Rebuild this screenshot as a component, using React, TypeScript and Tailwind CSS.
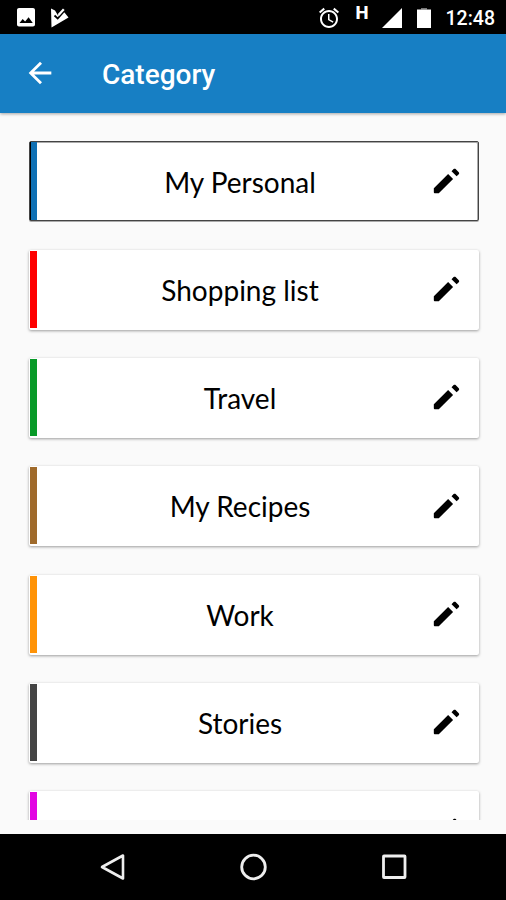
interface Category {
  name: string
  color: string
  selected?: boolean
}

const categories: Array<Category> = [
  { name: 'My Personal', color: 'bg-[#0f70b4]', selected: true },
  { name: 'Shopping list', color: 'bg-[#fe0000]' },
  { name: 'Travel', color: 'bg-[#089a28]' },
  { name: 'My Recipes', color: 'bg-[#9f6a2b]' },
  { name: 'Work', color: 'bg-[#ff9307]' },
  { name: 'Stories', color: 'bg-[#444444]' },
  { name: '', color: 'bg-[#e205e2]' },
]

function StatusBar() {
  return (
    <div className="flex h-[34px] shrink-0 items-center justify-between bg-black pr-[11px] pl-[14px] text-white">
      <div className="flex items-center gap-[11px]">
        <svg className="h-6 w-6" viewBox="0 0 24 24" fill="currentColor">
          <path d="M21 19.500V5c0-1.100-.900-2-2-2H5c-1.100 0-2 .900-2 2v14.500c0 1.100.900 2 2 2h14c1.100 0 2-.900 2-2zM5.500 18l3.200-4 2.400 2.600 3.500-4.300 4.200 5.700z" />
        </svg>
        <svg className="mt-px h-5 w-5" viewBox="0 0 20 20">
          <path
            d="M2 .500 6 2.500 9 7.500 12 4.500 15.500 4.500 19.500 9.400 2.500 19.500z"
            fill="currentColor"
          />
          <path d="M5.500 7.500 8.700 10.500 14.500 4" fill="none" stroke="black" strokeWidth="1.800" />
          <path d="M9.500 7 14.800 1.300" stroke="currentColor" strokeWidth="2.200" />
        </svg>
      </div>

      <div className="flex items-center">
        <svg className="mt-px h-6 w-6" viewBox="0 0 24 24" fill="currentColor">
          <path d="M22 5.720l-4.600-3.860-1.290 1.530 4.600 3.860L22 5.720zM7.880 3.390L6.600 1.860 2 5.710l1.290 1.530 4.590-3.850zM12.500 8H11v6l4.750 2.850.75-1.230-4-2.370V8zM12 4c-4.970 0-9 4.030-9 9s4.020 9 9 9c4.970 0 9-4.030 9-9s-4.030-9-9-9zm0 16c-3.870 0-7-3.130-7-7s3.130-7 7-7 7 3.130 7 7-3.130 7-7 7z" />
        </svg>
        <span className="mb-2 ml-[15px] w-[13px] text-[18.500px] leading-none font-extrabold">
          H
        </span>
        <svg className="mt-[2px] ml-[13px] h-5 w-5" viewBox="0 0 20 20" fill="currentColor">
          <path d="M20 0v20H0z" />
        </svg>
        <svg className="mt-[2px] ml-[15px] h-5 w-[14px]" viewBox="0 0 14 20">
          <path d="M4 0h6v1.500H4z" fill="#777" />
          <path d="M0 1.500h14V20H0z" fill="currentColor" />
        </svg>
        <span className="mt-[3px] ml-[15px] text-[19.500px] leading-none font-medium">
          12:48
        </span>
      </div>
    </div>
  )
}

function AppBar() {
  return (
    <header className="z-10 flex h-[79px] shrink-0 items-center bg-[#177fc4] pl-[23px] text-white shadow-[0_1px_3px_rgba(0,0,0,0.35)]">
      <svg className="mb-px h-[34px] w-[34px]" viewBox="0 0 24 24" fill="currentColor">
        <path d="M20 11H7.830l5.590-5.590L12 4l-8 8 8 8 1.410-1.410L7.830 13H20v-2z" />
      </svg>
      <h1 className="mt-[3px] ml-[45px] text-[28px] leading-none font-medium">Category</h1>
    </header>
  )
}

function CategoryCard({ name, color, selected }: Category) {
  return (
    <li
      className={`flex h-20 shrink-0 items-center rounded-[2px] border bg-white pr-[15px] ${
        selected
          ? 'border-[#444] shadow-[inset_-1px_1px_0_#aaa,0_1px_0_#aaa]'
          : 'border-b-2 border-transparent shadow-[0_1px_3px_rgba(0,0,0,0.38)]'
      }`}
    >
      <div
        className={`w-[7px] self-stretch ${color} ${selected ? 'border-l border-black' : ''}`}
      />
      <span className="flex-1 pt-px pr-[5px] pl-[19px] text-center font-['Lato',sans-serif] text-[28px] text-black">
        {name}
      </span>
      <svg className="h-[34px] w-[34px] shrink-0" viewBox="0 0 24 24" fill="black">
        <path d="M3.400 17.100V20c0 .400.200.700.600.700h2.900L17 10.600 13.500 7 3.400 17.100zM21 7.200c.400-.400.400-1 0-1.400l-2.200-2.200c-.400-.400-1-.400-1.400 0l-1.500 1.500 3.600 3.600L21 7.200z" />
      </svg>
    </li>
  )
}

function NavigationBar() {
  return (
    <nav className="flex h-[66px] shrink-0 items-center justify-center gap-[113px] bg-black pl-[2px] text-[#eee]">
      <svg className="h-7 w-7" viewBox="0 0 28 28" fill="none" stroke="currentColor">
        <path d="M3 14 24 2.500v23z" strokeWidth="2.600" strokeLinejoin="round" />
      </svg>
      <svg className="h-7 w-7" viewBox="0 0 28 28" fill="none" stroke="currentColor">
        <circle cx="13.500" cy="14" r="11.800" strokeWidth="2.800" />
      </svg>
      <svg className="h-7 w-7" viewBox="0 0 28 28" fill="none" stroke="currentColor">
        <rect x="2.500" y="3" width="21.500" height="21.500" rx="0.500" strokeWidth="2.800" />
      </svg>
    </nav>
  )
}

export default function App() {
  return (
    <div className="flex h-[900px] w-[506px] flex-col overflow-hidden bg-[#fafafa] font-['Roboto',sans-serif]">
      <StatusBar />
      <AppBar />
      <main className="mb-[14px] min-h-0 flex-1 overflow-hidden">
        <ul className="flex flex-col gap-[28.300px] pt-[28.400px] pr-[27px] pl-[29px]">
          {categories.map((category, index) => (
            <CategoryCard key={index} {...category} />
          ))}
        </ul>
      </main>
      <NavigationBar />
    </div>
  )
}
